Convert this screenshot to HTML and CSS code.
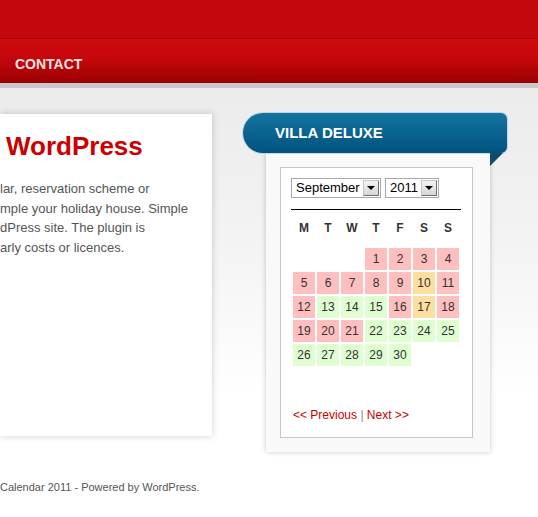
FILE: index.html
```html
<!DOCTYPE html>
<html>
<head>
<meta charset="utf-8">
<link rel="stylesheet" href="styles.css">
</head>
<body>
<header class="site-header">
  <div class="topband"></div>
  <nav class="nav"><a class="nav-item">CONTACT</a></nav>
  <div class="navshadow"></div>
</header>
<div class="page">
  <div class="content-row">
    <main class="main-box">
      <h1 class="title">WordPress</h1>
      <p class="intro">lar, reservation scheme or<br>mple your holiday house. Simple<br>dPress site. The plugin is<br>arly costs or licences.</p>
    </main>
    <aside class="widget">
      <div class="tab">VILLA DELUXE</div>
      <div class="fold"></div>
      <div class="panel">
        <div class="cal">
          <div class="selects">
            <span class="sel sel-month"><span class="sel-text">September</span><span class="sel-btn"></span></span>
            <span class="sel sel-year"><span class="sel-text">2011</span><span class="sel-btn"></span></span>
          </div>
          <div class="rule"></div>
          <div class="dow">
            <span>M</span><span>T</span><span>W</span><span>T</span><span>F</span><span>S</span><span>S</span>
          </div>
          <div class="days">
            <span class="empty"></span><span class="empty"></span><span class="empty"></span>
            <span class="b">1</span><span class="b">2</span><span class="b">3</span><span class="b">4</span>
            <span class="b">5</span><span class="b">6</span><span class="b">7</span><span class="b">8</span><span class="b">9</span><span class="o">10</span><span class="b">11</span>
            <span class="b">12</span><span class="f">13</span><span class="f">14</span><span class="f">15</span><span class="b">16</span><span class="o">17</span><span class="b">18</span>
            <span class="b">19</span><span class="b">20</span><span class="b">21</span><span class="f">22</span><span class="f">23</span><span class="f">24</span><span class="f">25</span>
            <span class="f">26</span><span class="f">27</span><span class="f">28</span><span class="f">29</span><span class="f">30</span>
          </div>
          <div class="pager"><a class="plink">&lt;&lt; Previous</a> <span class="sep">|</span> <a class="plink">Next &gt;&gt;</a></div>
        </div>
      </div>
    </aside>
  </div>
  <footer class="footer">Calendar 2011 - Powered by WordPress.</footer>
</div>
</body>
</html>
```
FILE: styles.css
```css
html, body {
  margin: 0;
  padding: 0;
}
body {
  font-family: "Liberation Sans", Arial, sans-serif;
  background: #fff;
  width: 538px;
  overflow: hidden;
}
.topband {
  height: 38px;
  background: #c4070c;
  border-bottom: 1px solid #980006;
}
.nav {
  height: 44px;
  background: linear-gradient(#d00a0e, #c4070b 45%, #9a0002);
  box-sizing: border-box;
  padding: 16px 0 0 15px;
}
.nav-item {
  font-size: 14px;
  line-height: 16px;
  font-weight: bold;
  color: #ffe0e0;
}
.navshadow {
  height: 5px;
  background: #c9c9c9;
}
.page {
  background: linear-gradient(#ebebeb, #f3f3f3 150px, #ffffff 310px);
  padding-top: 25px;
  height: 424px;
  box-sizing: border-box;
}
.content-row {
  display: flex;
  align-items: flex-start;
  gap: 31px;
}
.main-box {
  width: 212px;
  height: 322px;
  margin-top: 1px;
  background: #fff;
  box-shadow: 0 0 7px rgba(0, 0, 0, 0.2);
  box-sizing: border-box;
  padding-top: 17px;
  flex: none;
}
.title {
  margin: 0 0 18px 6px;
  font-size: 26px;
  line-height: 30px;
  font-weight: bold;
  color: #cc0000;
}
.intro {
  margin: 0;
  font-size: 13px;
  line-height: 19.6px;
  color: #555;
}
.widget {
  position: relative;
  width: 264px;
  flex: none;
}
.tab {
  height: 40px;
  box-sizing: border-box;
  border-radius: 20px 6px 6px 20px;
  background: linear-gradient(#15729f, #0a6390 50%, #01527e);
  box-shadow: 0 0 0 1px rgba(150, 200, 225, 0.6);
  color: #fff;
  font-size: 15px;
  font-weight: bold;
  line-height: 40px;
  padding-left: 32px;
  position: relative;
  z-index: 2;
}
.fold {
  position: absolute;
  left: 247px;
  top: 40px;
  width: 0;
  height: 0;
  border-top: 13px solid #0e4b6c;
  border-right: 13px solid transparent;
  z-index: 3;
}
.panel {
  margin-left: 23px;
  width: 224px;
  background: #f9f9f9;
  box-shadow: 0 0 5px rgba(0, 0, 0, 0.22);
  box-sizing: border-box;
  padding: 14px 17px 14px 14px;
  position: relative;
  z-index: 1;
}
.cal {
  background: #fff;
  border: 1px solid #c6c6c6;
  padding: 10px 10px 16px 10px;
  height: 271px;
  box-sizing: border-box;
}
.selects {
  display: flex;
  gap: 4px;
  height: 20px;
}
.sel {
  display: inline-flex;
  align-items: center;
  height: 20px;
  box-sizing: border-box;
  border: 1px solid #a9a9a9;
  background: #fff;
  font-size: 13px;
  color: #000;
}
.sel-month { width: 90px; }
.sel-year { width: 54px; }
.sel-text {
  flex: 1;
  padding-left: 4px;
  line-height: 18px;
}
.sel-btn {
  width: 16px;
  height: 16px;
  margin: 0 1px 0 0;
  box-sizing: border-box;
  border: 1px solid #7f7f7f;
  border-color: #c8c8c8 #707070 #707070 #c8c8c8;
  background: linear-gradient(#f3f3f3, #d6d6d6);
  position: relative;
}
.sel-btn::after {
  content: "";
  position: absolute;
  left: 3px;
  top: 5px;
  border-left: 4px solid transparent;
  border-right: 4px solid transparent;
  border-top: 4px solid #000;
}
.rule {
  margin-top: 11px;
  width: 170px;
  height: 1px;
  background: #000;
}
.dow {
  display: grid;
  grid-template-columns: repeat(7, 22px);
  column-gap: 2px;
  padding: 0 2px;
  height: 36px;
  line-height: 36px;
  font-size: 12px;
  font-weight: bold;
  color: #333;
  text-align: center;
}
.days {
  display: grid;
  grid-template-columns: repeat(7, 22px);
  grid-auto-rows: 22px;
  gap: 2px;
  padding: 2px;
  font-size: 12px;
  color: #333;
  text-align: center;
  line-height: 22px;
  height: 120px;
  box-sizing: border-box;
}
.days .b { background: #ffbfbf; }
.days .o { background: #ffdf9f; }
.days .f { background: #dfffd1; }
.pager {
  margin-top: 42px;
  padding-left: 2px;
  font-size: 12px;
  line-height: 14px;
  color: #cc0000;
}
.plink { color: #cc0000; }
.sep { color: #7390b0; }
.footer {
  margin-top: 28px;
  font-size: 11px;
  line-height: 14px;
  color: #555;
}
```
